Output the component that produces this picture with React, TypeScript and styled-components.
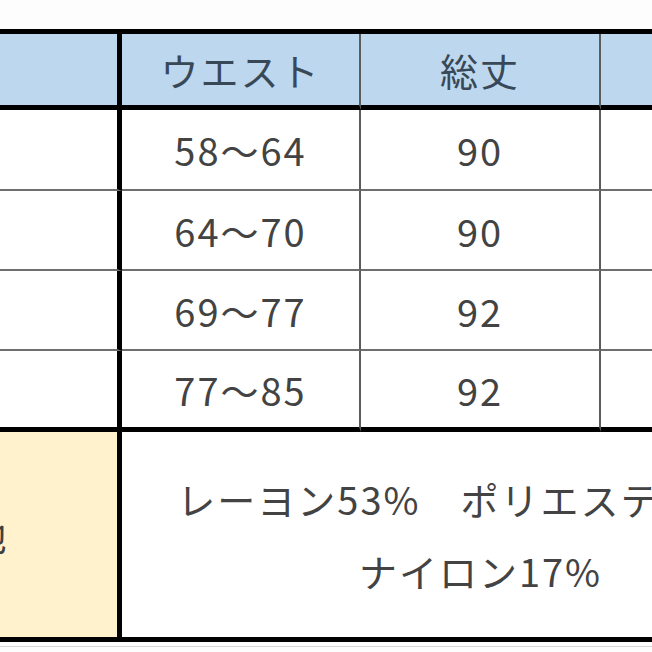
import React from 'react';
import styled, { createGlobalStyle } from 'styled-components';

const GlobalStyle = createGlobalStyle`
  html, body {
    margin: 0;
    padding: 0;
    background: #ffffff;
  }
  body {
    font-family: "Noto Sans CJK JP", "Noto Sans", sans-serif;
  }
`;

const Page = styled.div`
  width: 652px;
  height: 652px;
  overflow: hidden;
  padding-top: 29px;
  box-sizing: border-box;
  background: #fdfdfd;
`;

const Chart = styled.div`
  margin-left: -283px;
  width: max-content;
  border: 5px solid #000;
  display: grid;
  grid-template-columns: 400px 239px 240px 238px;
`;

const Cell = styled.div<{ $head?: boolean; $last?: boolean; $bottom?: 'thin' | 'thick' | 'none' }>`
  display: flex;
  align-items: center;
  justify-content: center;
  box-sizing: border-box;
  font-size: 38px;
  letter-spacing: 2px;
  color: ${(p) => (p.$head ? '#394857' : '#434343')};
  background: ${(p) => (p.$head ? '#bdd7ee' : '#ffffff')};
  border-right: ${(p) => (p.$last ? 'none' : '2px solid #5c5c5c')};
  border-bottom: ${(p) =>
    p.$bottom === 'thick' ? '5px solid #000' : p.$bottom === 'none' ? 'none' : '2px solid #6e6e6e'};
`;

const LabelCell = styled(Cell)`
  border-right: 5px solid #000;
`;

const HeadRow = styled.div`
  display: contents;
  & > div {
    height: 76px;
  }
`;

const DataRow = styled.div<{ $h: number }>`
  display: contents;
  & > div {
    height: ${(p) => p.$h}px;
  }
`;

const MaterialLabel = styled(LabelCell)`
  height: 205px;
  padding-right: 22px;
  background: #fff2cc;
  color: #404040;
  border-bottom: none;
`;

const MaterialCell = styled.div`
  grid-column: 2 / span 3;
  height: 205px;
  display: flex;
  flex-direction: column;
  align-items: center;
  justify-content: center;
  font-size: 38px;
  letter-spacing: 2px;
  line-height: 72px;
  color: #434343;
  background: #fff;
`;

const Rule = styled.div`
  margin-top: 4px;
  height: 1px;
  background: #d6d6d6;
`;

const rows = [
  { size: 'S', waist: '58〜64', length: '90', hip: '87', h: 81 },
  { size: 'M', waist: '64〜70', length: '90', hip: '92', h: 80 },
  { size: 'L', waist: '69〜77', length: '92', hip: '97', h: 80 },
  { size: 'LL', waist: '77〜85', length: '92', hip: '102', h: 81 },
];

const App = () => (
  <Page>
    <GlobalStyle />
    <Chart>
      <HeadRow>
        <LabelCell $head $bottom="thick">サイズ</LabelCell>
        <Cell $head $bottom="thick">ウエスト</Cell>
        <Cell $head $bottom="thick">総丈</Cell>
        <Cell $head $last $bottom="thick">ヒップ</Cell>
      </HeadRow>
      {rows.map((r, i) => {
        const bottom = i === rows.length - 1 ? 'thick' : 'thin';
        return (
          <DataRow key={r.size} $h={r.h}>
            <LabelCell $bottom={bottom}>{r.size}</LabelCell>
            <Cell $bottom={bottom}>{r.waist}</Cell>
            <Cell $bottom={bottom}>{r.length}</Cell>
            <Cell $last $bottom={bottom}>{r.hip}</Cell>
          </DataRow>
        );
      })}
      <MaterialLabel>素材・生地</MaterialLabel>
      <MaterialCell>
        <div>レーヨン53%　ポリエステル30%</div>
        <div>ナイロン17%</div>
      </MaterialCell>
    </Chart>
    <Rule />
  </Page>
);

export default App;
